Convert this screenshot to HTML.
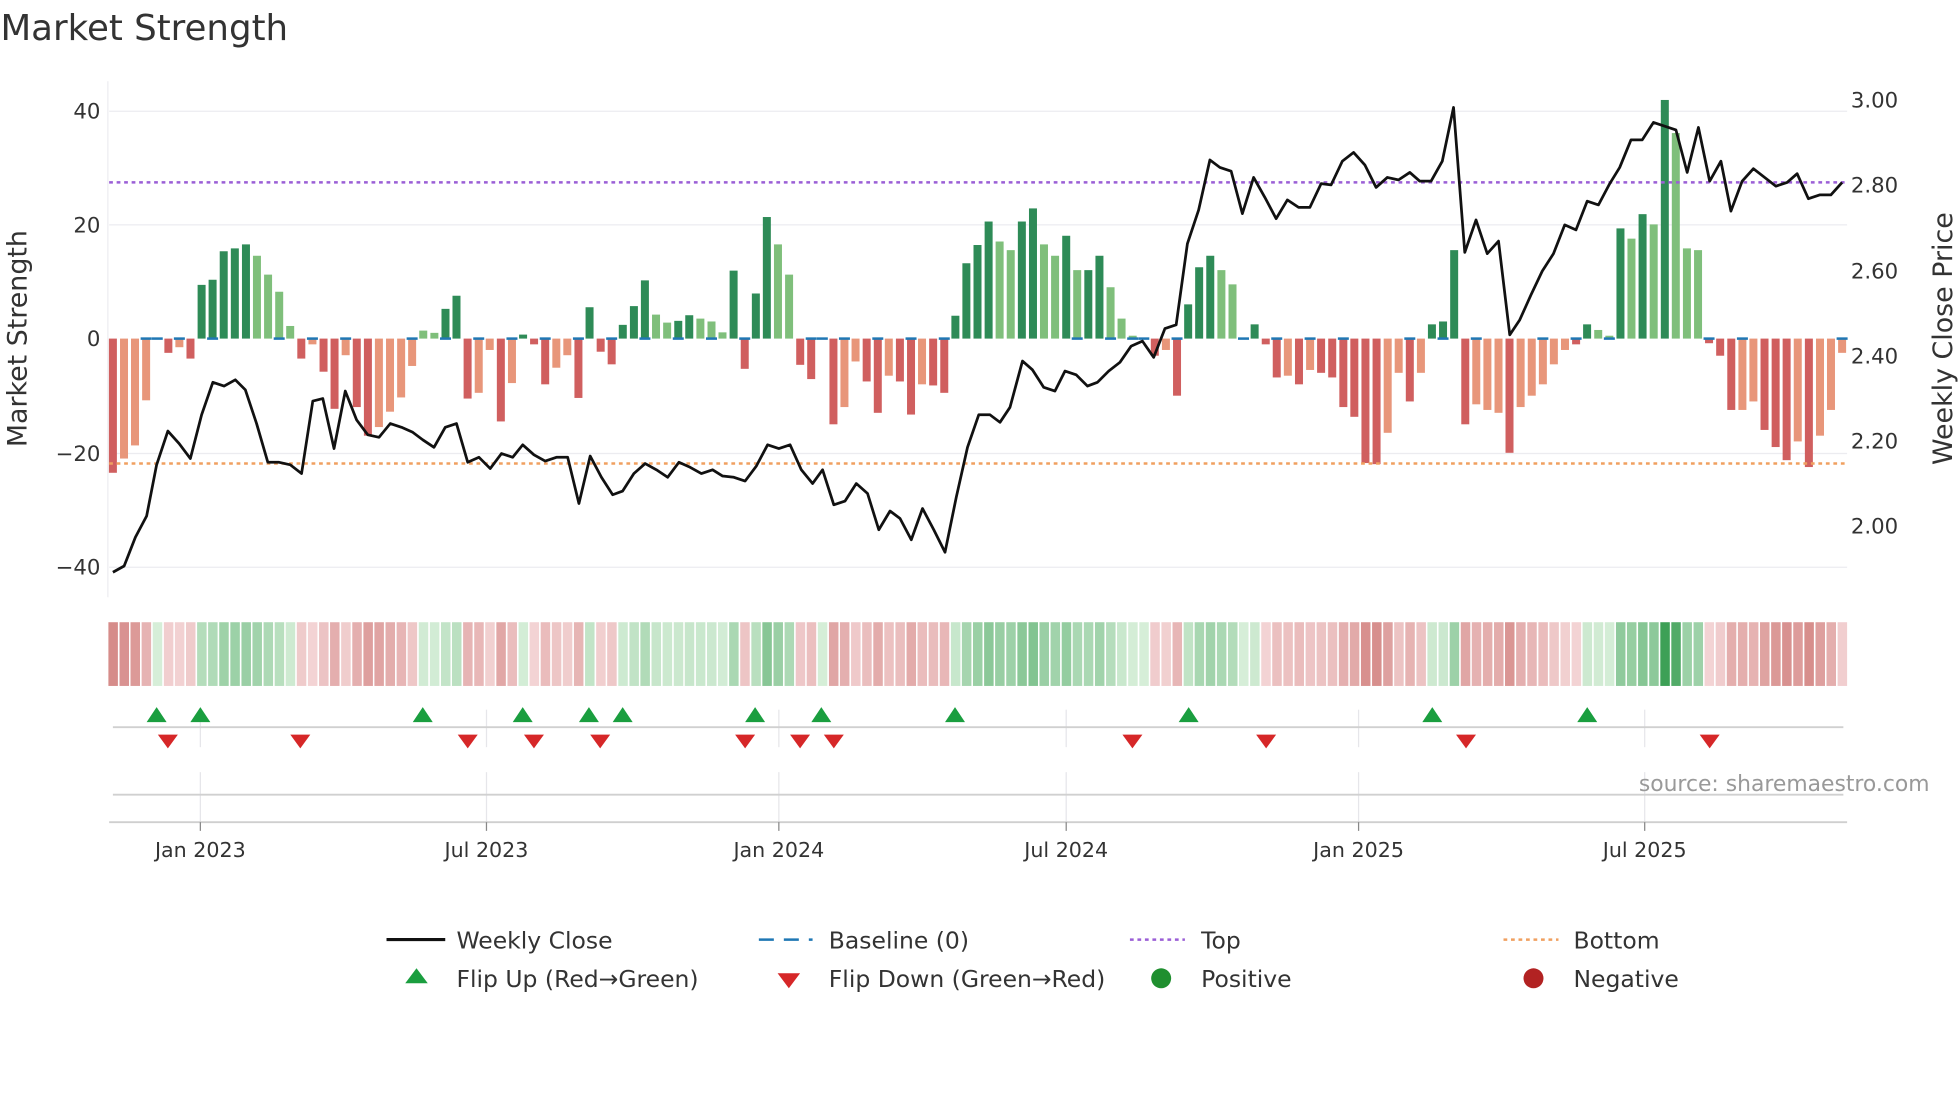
<!DOCTYPE html>
<html><head><meta charset="utf-8"><style>
html,body{margin:0;padding:0;background:#fff;width:1960px;height:1102px;overflow:hidden}
svg{display:block}
text{font-family:"DejaVu Sans","Liberation Sans",sans-serif;fill:#333}
text.src{fill:#999}
</style></head><body>
<svg id="s" width="1960" height="1102" viewBox="0 0 1568 882" xmlns="http://www.w3.org/2000/svg">
<text x="0" y="32" font-size="28.5">Market Strength</text>
<g stroke="#ececf0" stroke-width="1">
<line x1="87" y1="89" x2="1478" y2="89"/><line x1="87" y1="180" x2="1478" y2="180"/>
<line x1="87" y1="363" x2="1478" y2="363"/><line x1="87" y1="454" x2="1478" y2="454"/>
<line x1="86" y1="65" x2="86" y2="478"/>
</g>
<g font-size="17" text-anchor="end">
<text x="80" y="95">40</text><text x="80" y="186">20</text><text x="80" y="277">0</text>
<text x="80" y="369">−20</text><text x="80" y="460">−40</text>
</g>
<g font-size="17">
<text x="1481" y="86">3.00</text><text x="1481" y="154">2.80</text><text x="1481" y="223">2.60</text>
<text x="1481" y="291">2.40</text><text x="1481" y="359">2.20</text><text x="1481" y="427">2.00</text>
</g>
<text transform="translate(21,271) rotate(-90)" font-size="21.5" text-anchor="middle">Market Strength</text>
<text transform="translate(1562,271) rotate(-90)" font-size="21.5" text-anchor="middle">Weekly Close Price</text>
<g id="bars"></g>
<line x1="87" y1="146" x2="1478" y2="146" stroke="#9b5fd6" stroke-width="2" stroke-dasharray="3,3"/>
<line x1="87" y1="371" x2="1478" y2="371" stroke="#f0a060" stroke-width="2" stroke-dasharray="3,3"/>
<polyline id="close" fill="none" stroke="#111" stroke-width="2.2" stroke-linejoin="round"/>
<g id="heat"></g>
<g stroke="#e6e6ea" stroke-width="1">
<line x1="160" y1="568" x2="160" y2="598"/><line x1="389" y1="568" x2="389" y2="598"/><line x1="623" y1="568" x2="623" y2="598"/><line x1="853" y1="568" x2="853" y2="598"/><line x1="1087" y1="568" x2="1087" y2="598"/><line x1="1316" y1="568" x2="1316" y2="598"/>
<line x1="160" y1="618" x2="160" y2="658"/><line x1="389" y1="618" x2="389" y2="658"/><line x1="623" y1="618" x2="623" y2="658"/><line x1="853" y1="618" x2="853" y2="658"/><line x1="1087" y1="618" x2="1087" y2="658"/><line x1="1316" y1="618" x2="1316" y2="658"/>
</g>
<line x1="90" y1="582" x2="1475" y2="582" stroke="#d0d0d0" stroke-width="1.5"/>
<line x1="90" y1="636" x2="1475" y2="636" stroke="#d0d0d0" stroke-width="1.5"/>
<line x1="87" y1="658" x2="1478" y2="658" stroke="#cfcfcf" stroke-width="1.5"/>
<g stroke="#888" stroke-width="1">
<line x1="160" y1="658" x2="160" y2="665"/><line x1="389" y1="658" x2="389" y2="665"/><line x1="623" y1="658" x2="623" y2="665"/><line x1="853" y1="658" x2="853" y2="665"/><line x1="1087" y1="658" x2="1087" y2="665"/><line x1="1316" y1="658" x2="1316" y2="665"/>
</g>
<g id="flips"></g>
<text class="src" x="1544" y="633" font-size="17.5" text-anchor="end">source: sharemaestro.com</text>
<g font-size="16.5" text-anchor="middle">
<text x="160" y="686">Jan 2023</text><text x="389" y="686">Jul 2023</text><text x="623" y="686">Jan 2024</text>
<text x="853" y="686">Jul 2024</text><text x="1087" y="686">Jan 2025</text><text x="1316" y="686">Jul 2025</text>
</g>
<g font-size="18.8">
<line x1="309" y1="752" x2="356" y2="752" stroke="#111" stroke-width="2.5"/>
<text x="365" y="759">Weekly Close</text>
<line x1="607" y1="752" x2="650" y2="752" stroke="#1f77b4" stroke-width="2" stroke-dasharray="12,8"/>
<text x="663" y="759">Baseline (0)</text>
<line x1="904" y1="752" x2="948" y2="752" stroke="#9b5fd6" stroke-width="2" stroke-dasharray="3,3"/>
<text x="961" y="759">Top</text>
<line x1="1203" y1="752" x2="1247" y2="752" stroke="#f0a060" stroke-width="2" stroke-dasharray="3,3"/>
<text x="1259" y="759">Bottom</text>
<polygon points="324,787 342,787 333,775" fill="#1a9e3f"/>
<text x="365" y="790">Flip Up (Red→Green)</text>
<polygon points="622,779 640,779 631,791" fill="#d62728"/>
<text x="663" y="790">Flip Down (Green→Red)</text>
<circle cx="929" cy="783" r="8" fill="#1f8f2f"/>
<text x="961" y="790">Positive</text>
<circle cx="1227" cy="783" r="8" fill="#b22222"/>
<text x="1259" y="790">Negative</text>
</g>
</svg>
<script>
var V=[[-23.5,'r'],[-21,'s'],[-18.7,'s'],[-10.8,'s'],[0,''],[-2.5,'r'],[-1.5,'s'],[-3.5,'r'],[9.4,'g'],[10.3,'g'],[15.3,'g'],[15.8,'g'],[16.5,'g'],[14.5,'l'],[11.2,'l'],[8.2,'l'],[2.2,'l'],[-3.5,'r'],[-1,'s'],[-5.8,'r'],[-12.3,'r'],[-2.9,'s'],[-12,'r'],[-17,'r'],[-15.5,'s'],[-12.8,'s'],[-10.3,'s'],[-4.8,'s'],[1.4,'l'],[1,'l'],[5.2,'g'],[7.5,'g'],[-10.5,'r'],[-9.5,'s'],[-2,'s'],[-14.5,'r'],[-7.8,'s'],[0.7,'g'],[-1,'r'],[-8,'r'],[-5.1,'s'],[-2.9,'s'],[-10.4,'r'],[5.5,'g'],[-2.3,'r'],[-4.5,'r'],[2.4,'g'],[5.7,'g'],[10.2,'g'],[4.2,'l'],[2.8,'l'],[3.1,'g'],[4.1,'g'],[3.5,'l'],[3,'l'],[1.1,'l'],[11.9,'g'],[-5.3,'r'],[7.9,'g'],[21.3,'g'],[16.5,'l'],[11.2,'l'],[-4.6,'r'],[-7.1,'r'],[0.2,''],[-15,'r'],[-12,'s'],[-4,'s'],[-7.5,'r'],[-13,'r'],[-6.5,'s'],[-7.5,'r'],[-13.3,'r'],[-8,'s'],[-8.2,'r'],[-9.5,'r'],[4,'g'],[13.2,'g'],[16.4,'g'],
[20.5,'g'],[17,'l'],[15.5,'l'],[20.5,'g'],[22.8,'g'],[16.5,'l'],[14.5,'l'],[18,'g'],[12,'l'],[12,'g'],[14.5,'g'],[9,'l'],[3.5,'l'],[0.5,'l'],[0,''],[-3,'r'],[-2,'s'],[-10,'r'],[6,'g'],[12.5,'g'],[14.5,'g'],[12,'l'],[9.5,'l'],[0,''],[2.5,'g'],[-1,'r'],[-6.8,'r'],[-6.5,'s'],[-8,'r'],[-5.5,'s'],[-6,'r'],[-6.8,'r'],[-12,'r'],[-13.7,'r'],[-21.8,'r'],[-22,'r'],[-16.5,'s'],[-6,'s'],[-11,'r'],[-6,'s'],[2.5,'g'],[3,'g'],[15.5,'g'],[-15,'r'],[-11.5,'s'],[-12.5,'s'],[-13,'s'],[-20,'r'],[-12,'s'],[-10,'s'],[-8,'s'],[-4.5,'s'],[-2,'s'],[-1,'r'],[2.5,'g'],[1.5,'l'],[0.5,'l'],[19.3,'g'],[17.5,'l'],[21.8,'g'],[20,'l'],[41.8,'g'],[36,'l'],[15.8,'l'],[15.5,'l'],[-0.8,'r'],[-3,'r'],[-12.5,'r'],[-12.5,'s'],[-11,'s'],[-16,'r'],[-19,'r'],[-21.3,'r'],[-18,'s'],[-22.5,'r'],[-17,'s'],[-12.5,'s'],[-2.5,'s']];
var C={r:'#d05f5f',s:'#e8967a',g:'#2e8b57',l:'#7fbf7b','':'#fff'};
var n=V.length,st=(1474-90)/(n-1),b='',h='';
function mix(a,c,t){return 'rgb('+[0,1,2].map(function(k){return Math.round(a[k]+(c[k]-a[k])*t)}).join(',')+')';}
for(var i=0;i<n;i++){var x=90+i*st,v=V[i][0],y0=271,y1=271-v*4.57;
 if(Math.abs(v)>0.05)b+='<rect x="'+(x-3.2).toFixed(1)+'" y="'+Math.min(y0,y1).toFixed(1)+'" width="6.4" height="'+Math.abs(y1-y0).toFixed(1)+'" fill="'+C[V[i][1]]+'"/>';
 if(v<=0.6&&v>=-0.6||i%3==0&&Math.abs(v)<14)b+='<line x1="'+(x-4.4).toFixed(1)+'" y1="271" x2="'+(x+4.4).toFixed(1)+'" y2="271" stroke="#1f77b4" stroke-width="2"/>';
 var col=v>=0?mix([214,238,216],[60,160,85],Math.min(1,v/42)):mix([244,214,215],[214,140,138],Math.min(1,-v/23));
 h+='<rect x="'+(x-3.6).toFixed(1)+'" y="498" width="7.6" height="51" fill="'+col+'"/>';}
document.getElementById('bars').innerHTML=b;document.getElementById('heat').innerHTML=h;
var P="90,458 99,453 108,430 117,413 125,372 134,345 143,355 152,367 161,332 170,306 179,309 188,304 196,312 205,339 214,370 223,370 232,372 241,379 250,321 258,319 267,359 276,313 285,336 294,348 303,350 312,339 321,342 330,346 338,352 347,358 356,342 365,339 374,370 383,366 392,375 401,363 410,366 418,356 427,364 436,369 445,366 454,366 463,403 472,365 481,382 490,396 498,393 507,379 516,371 525,376 534,382 543,370 552,374 561,379 570,376 578,381 587,382 596,385 605,373 614,356 623,359 632,356 641,376 650,387 658,376 667,404 676,401 685,387 694,395 703,424 712,409 720,415 729,432 738,407 747,424 756,442 765,398 774,358 783,332 792,332 800,338 808,326 818,289 826,296 835,310 844,313 852,297 861,300 870,309 878,306 887,297 896,290 905,277 914,273 923,286 932,263 941,260 950,195 959,168 968,128 976,134 985,137 994,171 1003,142 1012,158 1021,175 1030,160 1039,166 1048,166 1057,147 1065,148 1074,129 1083,122 1092,132 1101,150 1110,142 1119,144 1128,138 1136,145 1145,145 1154,129 1163,86 1172,202 1181,176 1190,203 1199,193 1208,268 1216,256 1225,236 1234,217 1243,203 1252,180 1261,184 1270,161 1279,164 1288,147 1296,134 1305,112 1314,112 1323,98 1332,101 1341,104 1350,138 1359,102 1368,145 1377,129 1385,169 1394,145 1403,135 1412,142 1421,149 1430,146 1438,139 1447,159 1456,156 1465,156 1474,146";
document.getElementById('close').setAttribute('points',P);
var up=[125,160,338,418,471,498,604,657,764,951,1146,1270],dn=[134,240,374,427,480,596,640,667,906,1013,1173,1368],f='';
up.forEach(function(x){f+='<polygon points="'+(x-8)+',578 '+(x+8)+',578 '+x+',566" fill="#1a9e3f"/>';});
dn.forEach(function(x){f+='<polygon points="'+(x-8)+',588 '+(x+8)+',588 '+x+',599" fill="#d62728"/>';});
document.getElementById('flips').innerHTML=f;
</script>
</body></html>
